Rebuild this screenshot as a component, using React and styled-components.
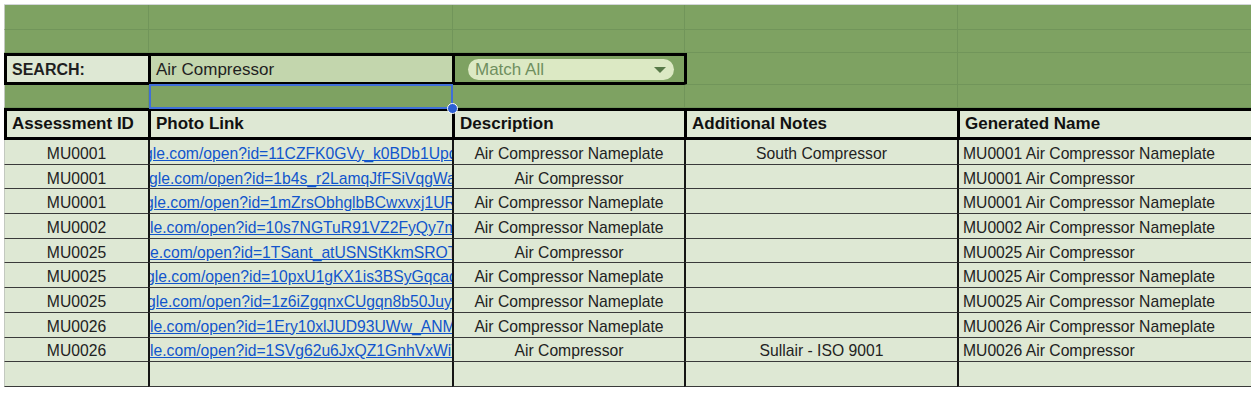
import styled, { createGlobalStyle } from 'styled-components';

const COLS = '144px 304px 232px 273px 294px';
const GREEN = '#7ea262';
const GREEN_LINE = '#71955a';
const PALE = '#dee8d4';

const GlobalStyle = createGlobalStyle`
  * { box-sizing: border-box; }
  html, body { margin: 0; background: #fff; }
  body { font-family: 'Liberation Sans', Arial, sans-serif; }
`;

const Sheet = styled.div`
  width: 1247px;
  margin: 4px 0 0 4px;
  border-top: 1px solid #d3d6d9;
  font-family: 'Liberation Sans', Arial, sans-serif;
  color: #1f1f1f;
`;

const Row = styled.div`
  display: grid;
  grid-template-columns: ${COLS};
  height: ${(p) => p.$h}px;
`;

const HeaderRow = styled(Row)`
  border-top: 3px solid #000;
  border-bottom: 3px solid #000;
`;

const GreenCell = styled.div`
  position: relative;
  background: ${GREEN};
  border-left: ${(p) => (p.$black ? '3px solid #000' : p.$first ? '1px solid #c3c9c0' : `1px solid ${GREEN_LINE}`)};
  border-bottom: 1px solid ${GREEN_LINE};
`;

const BoxedCell = styled.div`
  display: flex;
  align-items: center;
  background: ${(p) => p.$bg};
  border-top: 3px solid #000;
  border-bottom: 3px solid #000;
  border-left: 3px solid #000;
  padding: 1px 0 0 5px;
  font-size: ${(p) => (p.$bold ? 16 : 17)}px;
  font-weight: ${(p) => (p.$bold ? 700 : 400)};
  color: #1f1f1f;
`;

const Pill = styled.div`
  margin-left: 8px;
  width: 206px;
  height: 21px;
  border-radius: 11px;
  background: #dce9c4;
  display: flex;
  align-items: center;
  justify-content: space-between;
  padding: 0 8px 0 7px;
  font-size: 17px;
  color: #6f8f5f;
`;

const Caret = styled.span`
  width: 0;
  height: 0;
  border-left: 6px solid transparent;
  border-right: 6px solid transparent;
  border-top: 6px solid #587a48;
`;

const Selection = styled.div`
  position: absolute;
  top: -1px;
  left: 0;
  right: -1px;
  bottom: -2px;
  border: 2px solid #3f6fd8;
  z-index: 2;
`;

const Handle = styled.div`
  position: absolute;
  right: -7px;
  bottom: -7px;
  width: 11px;
  height: 11px;
  border-radius: 50%;
  background: #2b5fd3;
  border: 1px solid #fff;
`;

const HeaderCell = styled.div`
  display: flex;
  align-items: center;
  background: ${PALE};
  border-left: 3px solid #000;
  padding-left: 5px;
  font-size: 17px;
  font-weight: 700;
  color: #111;
`;

const DataRow = styled.div`
  display: grid;
  grid-template-columns: ${COLS};
  height: 24.7px;
`;

const DataCell = styled.div`
  display: flex;
  align-items: center;
  justify-content: ${(p) => (p.$left ? 'flex-start' : 'center')};
  padding: 4px 0 0 ${(p) => (p.$left ? 4 : 0)}px;
  background: ${PALE};
  border-left: ${(p) => (p.$first ? '1px solid #c3c9c0' : '2px solid #151515')};
  border-bottom: 1px solid #3a3a3a;
  font-size: 15.7px;
  white-space: nowrap;
  overflow: hidden;
  color: #222;
`;

const LinkCell = styled(DataCell)`
  justify-content: flex-start;
`;

const LinkText = styled.a`
  margin-left: ${(p) => p.$shift}px;
  color: #1155cc;
  text-decoration: underline;
  white-space: nowrap;
`;

const rows = [
  { id: 'MU0001', link: 'gle.com/open?id=11CZFK0GVy_k0BDb1UpdX4', shift: -6, desc: 'Air Compressor Nameplate', notes: 'South Compressor' },
  { id: 'MU0001', link: 'gle.com/open?id=1b4s_r2LamqJfFSiVqgWaK', shift: -1, desc: 'Air Compressor' },
  { id: 'MU0001', link: 'gle.com/open?id=1mZrsObhglbBCwxvxj1URq', shift: -5, desc: 'Air Compressor Nameplate' },
  { id: 'MU0002', link: 'le.com/open?id=10s7NGTuR91VZ2FyQy7mW', shift: 0, desc: 'Air Compressor Nameplate' },
  { id: 'MU0025', link: 'e.com/open?id=1TSant_atUSNStKkmSROTx', shift: 0, desc: 'Air Compressor' },
  { id: 'MU0025', link: 'gle.com/open?id=10pxU1gKX1is3BSyGqcadP', shift: -4, desc: 'Air Compressor Nameplate' },
  { id: 'MU0025', link: 'gle.com/open?id=1z6iZgqnxCUgqn8b50JuyR', shift: -3, desc: 'Air Compressor Nameplate' },
  { id: 'MU0026', link: 'le.com/open?id=1Ery10xlJUD93UWw_ANMb', shift: 0, desc: 'Air Compressor Nameplate' },
  { id: 'MU0026', link: 'le.com/open?id=1SVg62u6JxQZ1GnhVxWiT', shift: 0, desc: 'Air Compressor', notes: 'Sullair - ISO 9001' },
];

function GreenRow({ h }) {
  return (
    <Row $h={h}>
      <GreenCell $first />
      <GreenCell />
      <GreenCell />
      <GreenCell />
      <GreenCell />
    </Row>
  );
}

export default function App() {
  return (
    <>
      <GlobalStyle />
      <Sheet>
        <GreenRow h={25} />
        <GreenRow h={23} />
        <Row $h={32}>
          <BoxedCell $bg={PALE} $bold>SEARCH:</BoxedCell>
          <BoxedCell $bg='#c3d6ad'>Air Compressor</BoxedCell>
          <BoxedCell $bg={GREEN}>
            <Pill>
              Match All
              <Caret />
            </Pill>
          </BoxedCell>
          <GreenCell $black />
          <GreenCell />
        </Row>
        <Row $h={23}>
          <GreenCell $first />
          <GreenCell>
            <Selection>
              <Handle />
            </Selection>
          </GreenCell>
          <GreenCell />
          <GreenCell />
          <GreenCell />
        </Row>
        <HeaderRow $h={32}>
          <HeaderCell>Assessment ID</HeaderCell>
          <HeaderCell>Photo Link</HeaderCell>
          <HeaderCell>Description</HeaderCell>
          <HeaderCell>Additional Notes</HeaderCell>
          <HeaderCell>Generated Name</HeaderCell>
        </HeaderRow>
        {rows.map((r, i) => (
          <DataRow key={i}>
            <DataCell $first>{r.id}</DataCell>
            <LinkCell>
              <LinkText $shift={r.shift}>{r.link}</LinkText>
            </LinkCell>
            <DataCell>{r.desc}</DataCell>
            <DataCell>{r.notes || ''}</DataCell>
            <DataCell $left>{`${r.id} ${r.desc}`}</DataCell>
          </DataRow>
        ))}
        <DataRow>
          <DataCell $first />
          <DataCell />
          <DataCell />
          <DataCell />
          <DataCell />
        </DataRow>
      </Sheet>
    </>
  );
}
